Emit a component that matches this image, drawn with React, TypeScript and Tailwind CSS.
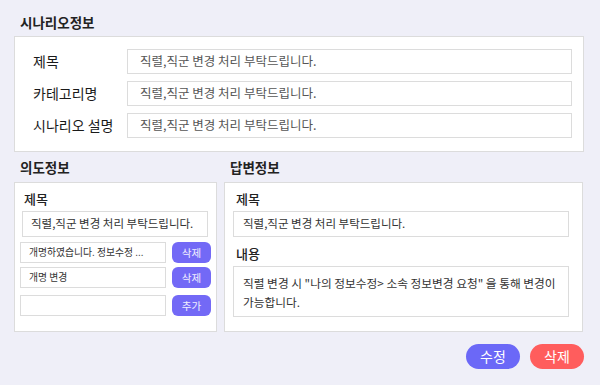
import React from "react";

const FONT = { fontFamily: '"Noto Sans CJK KR", "Noto Sans", sans-serif' };
const TEXT = "직렬,직군 변경 처리 부탁드립니다.";

function TopRow({ label }: { label: string }) {
  return (
    <div className="flex items-center h-[25px]">
      <div className="w-[112px] pl-[18px] text-[14px] text-[#1a1a1a]">{label}</div>
      <div className="w-[445px] h-[25px] border border-[#dcdcdc] bg-white pl-[12px] flex items-center text-[12.5px] text-[#555]">
        {TEXT}
      </div>
    </div>
  );
}

function IntentRow({ text, btn }: { text: string; btn: string }) {
  return (
    <div className="flex items-center gap-[6px] ml-[5px]">
      <div className="w-[146px] h-[21px] border border-[#dcdcdc] bg-white pl-[8px] flex items-center text-[9.8px] text-[#333] overflow-hidden whitespace-nowrap">
        {text}
      </div>
      <div className="w-[39px] h-[21px] rounded-[6px] bg-[#7369f6] text-white/90 text-[10.5px] flex items-center justify-center">
        {btn}
      </div>
    </div>
  );
}

export default function App() {
  return (
    <div className="w-[600px] h-[385px] bg-[#efeff8] px-[14px] pt-[12px]" style={FONT}>
      <div className="ml-[6px] h-[20px] leading-[20px] text-[13.5px] font-bold text-[#222]">시나리오정보</div>
      <div className="mt-[4px] w-[570px] h-[116px] border border-[#dcdcdc] bg-white pt-[12px] flex flex-col gap-[7px]">
        <TopRow label="제목" />
        <TopRow label="카테고리명" />
        <TopRow label="시나리오 설명" />
      </div>
      <div className="mt-[5px] flex gap-[7px]">
        <div className="w-[203px] flex flex-col">
          <div className="ml-[6px] h-[21px] leading-[21px] text-[13.5px] font-bold text-[#222]">의도정보</div>
          <div className="mt-[4px] h-[150px] border border-[#dcdcdc] bg-white pt-[6px] flex flex-col">
            <div className="ml-[9px] h-[20px] leading-[20px] text-[13px] font-medium text-[#222]">제목</div>
            <div className="mt-[2px] ml-[7px] w-[186px] h-[26px] border border-[#dcdcdc] bg-white pl-[8px] flex items-center text-[11.5px] text-[#333]">
              {TEXT}
            </div>
            <div className="mt-[5px]">
              <IntentRow text="개명하였습니다. 정보수정 ..." btn="삭제" />
            </div>
            <div className="mt-[4px]">
              <IntentRow text="개명 변경" btn="삭제" />
            </div>
            <div className="mt-[7px]">
              <IntentRow text="" btn="추가" />
            </div>
          </div>
        </div>
        <div className="w-[359px] flex flex-col">
          <div className="ml-[6px] h-[21px] leading-[21px] text-[13.5px] font-bold text-[#222]">답변정보</div>
          <div className="mt-[4px] h-[150px] border border-[#dcdcdc] bg-white pt-[6px] flex flex-col">
            <div className="ml-[11px] h-[20px] leading-[20px] text-[13px] font-medium text-[#222]">제목</div>
            <div className="mt-[2px] ml-[8px] w-[336px] h-[26px] border border-[#dcdcdc] bg-white pl-[9px] flex items-center text-[11.5px] text-[#333]">
              {TEXT}
            </div>
            <div className="mt-[7px] ml-[11px] h-[20px] leading-[20px] text-[13px] font-medium text-[#222]">내용</div>
            <div className="mt-[2px] ml-[8px] w-[336px] h-[51px] border border-[#dcdcdc] bg-white pl-[9px] pt-[6px] text-[11.7px] leading-[19px] text-[#333] whitespace-nowrap">
              직렬 변경 시 "나의 정보수정&gt; 소속 정보변경 요청" 을 통해 변경이
              <br />
              가능합니다.
            </div>
          </div>
        </div>
      </div>
      <div className="mt-[12px] flex justify-end gap-[10px] pr-[2px]">
        <div className="w-[54px] h-[25px] rounded-full bg-[#6b68f7] text-white text-[14px] flex items-center justify-center">수정</div>
        <div className="w-[54px] h-[25px] rounded-full bg-[#ff5d5d] text-white text-[14px] flex items-center justify-center">삭제</div>
      </div>
    </div>
  );
}
